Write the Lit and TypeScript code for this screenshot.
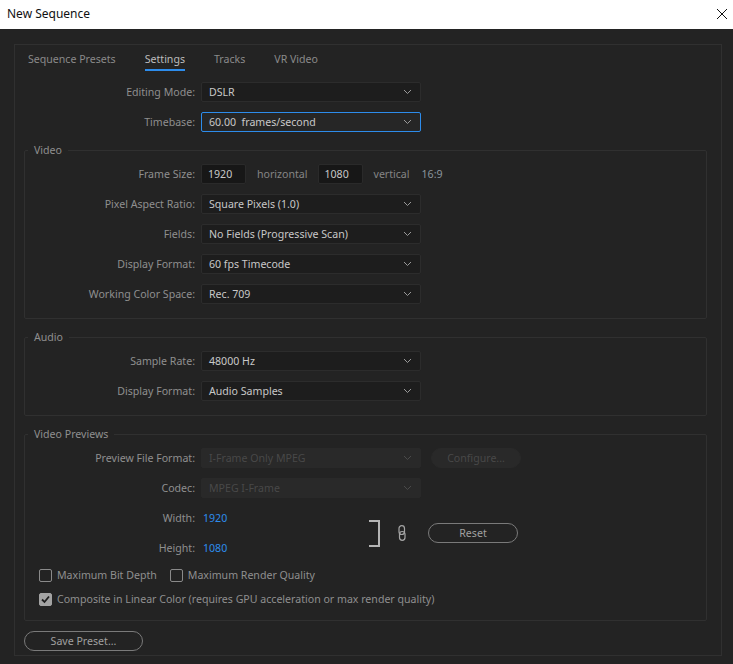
import { LitElement, html, css, svg } from "lit"
import { customElement } from "lit/decorators.js"

const chevron = html`<svg class="chev" width="9" height="6" viewBox="0 0 9 6">
  <path d="M1 1 L4.5 4.5 L8 1" fill="none" stroke="currentColor" stroke-width="1" />
</svg>`

const closeIcon = svg`<path d="M1 1 L11 11 M11 1 L1 11" fill="none" stroke="#111" stroke-width="1" />`

@customElement("app-root")
export class AppRoot extends LitElement {
  static styles = css`
    :host {
      display: block;
      width: 733px;
      height: 664px;
      overflow: hidden;
      background: #232323;
      color: #999;
      font-family: "Noto Sans", "Open Sans", sans-serif;
      font-size: 10.6px;
      line-height: 16px;
    }

    .titlebar {
      height: 29px;
      box-sizing: border-box;
      background: #fff;
      color: #111;
      font-size: 12px;
      display: flex;
      align-items: center;
      justify-content: space-between;
      padding: 0 5px 1px 7px;
    }

    .body {
      padding: 15px 11px 0 14px;
    }

    .panel {
      height: 612px;
      box-sizing: border-box;
      border: 1px solid #303030;
      padding: 0 14px 0 9px;
    }

    .tabs {
      display: flex;
      gap: 29px;
      height: 24px;
      padding: 6px 0 0 4px;
      margin-bottom: 7px;
      box-sizing: content-box;
    }

    .tab {
      height: 18px;
      color: #8a8a8a;
    }

    .tab.active {
      color: #bdbdbd;
      border-bottom: 2px solid #2d8ceb;
    }

    .top-rows {
      display: flex;
      flex-direction: column;
      gap: 10px;
      padding-left: 1px;
    }

    .rows {
      display: flex;
      flex-direction: column;
      gap: 10px;
    }

    .row {
      display: grid;
      grid-template-columns: 170px auto 1fr;
      column-gap: 6px;
      align-items: center;
      height: 20px;
    }

    .label {
      text-align: right;
      color: #8f8f8f;
    }

    .select {
      width: 220px;
      height: 20px;
      box-sizing: border-box;
      background: #1d1d1d;
      border: 1px solid #2c2c2c;
      border-radius: 2px;
      color: #c8c8c8;
      padding: 0 7px;
      display: flex;
      align-items: center;
      justify-content: space-between;
    }

    .select.focus {
      background: #262626;
      border-color: #2d8ceb;
    }

    .select.disabled {
      background: #292929;
      border-color: #292929;
      color: #484848;
    }

    .chev {
      color: #9a9a9a;
      margin-right: 1px;
    }

    .disabled .chev {
      color: #4a4a4a;
    }

    fieldset {
      margin: 10px 0 0;
      padding: 6px 0 14px;
      border: 1px solid #303030;
      border-radius: 2px;
      min-width: 0;
    }

    fieldset.previews {
      padding-bottom: 13px;
    }

    legend {
      margin-left: 3px;
      padding: 0 6px;
      color: #8f8f8f;
    }

    .frame-size {
      display: flex;
      align-items: center;
    }

    .num {
      width: 45px;
      height: 20px;
      box-sizing: border-box;
      background: #171717;
      border: 1px solid #2a2a2a;
      border-radius: 2px;
      color: #c8c8c8;
      padding: 0 0 0 6px;
      display: flex;
      align-items: center;
    }

    .unit {
      color: #858585;
      margin: 0 10px 0 11px;
    }

    .ratio {
      color: #8a949c;
      margin-left: 2px;
      margin-bottom: 1px;
    }

    .btn {
      box-sizing: border-box;
      height: 20px;
      border: 1px solid #7a7a7a;
      border-radius: 10px;
      color: #a0a0a0;
      display: flex;
      align-items: center;
      justify-content: center;
    }

    .configure {
      width: 90px;
      margin-left: 10px;
      background: #292929;
      border-color: #292929;
      color: #484848;
    }

    .dims {
      display: flex;
      align-items: center;
      margin-top: 10px;
    }

    .dims-rows {
      width: 344px;
      display: flex;
      flex-direction: column;
      gap: 10px;
    }

    .blue {
      color: #2d8ceb;
      padding-left: 2px;
    }

    .bracket {
      width: 11px;
      height: 27px;
      box-sizing: border-box;
      border: solid #b5b5b5;
      border-width: 2px 2px 2px 0;
    }

    .link {
      margin-left: 18px;
      color: #a5a5a5;
    }

    .reset {
      width: 90px;
      margin-left: 22px;
    }

    .checks {
      padding: 9px 0 0 14px;
      display: flex;
      flex-direction: column;
      gap: 8px;
    }

    .check-line {
      display: flex;
      gap: 13px;
    }

    .check {
      display: flex;
      align-items: center;
      gap: 5px;
      height: 16px;
      color: #8f8f8f;
    }

    .box {
      width: 13px;
      height: 13px;
      box-sizing: border-box;
      border: 1px solid #8a8a8a;
      border-radius: 2px;
    }

    .box.on {
      background: #a3a3a3;
      border-color: #a3a3a3;
    }

    .box svg {
      display: block;
    }

    .save {
      width: 119px;
      margin-top: 10px;
    }
  `

  private selectRow(label: string, value: string) {
    return html`<div class="row">
      <div class="label">${label}:</div>
      <div class="select"><span>${value}</span>${chevron}</div>
    </div>`
  }

  private check(label: string, on = false) {
    return html`<div class="check">
      <div class="box ${on ? "on" : ""}">
        ${on
          ? html`<svg width="11" height="11" viewBox="0 0 11 11">
              <path d="M2 5.5 L4.5 8 L9 2.5" fill="none" stroke="#1e1e1e" stroke-width="1.8" />
            </svg>`
          : ""}
      </div>
      <span>${label}</span>
    </div>`
  }

  render() {
    return html`
      <div class="titlebar">
        <span>New Sequence</span>
        <svg width="12" height="12" viewBox="0 0 12 12">${closeIcon}</svg>
      </div>
      <div class="body">
        <div class="panel">
          <div class="tabs">
            <div class="tab">Sequence Presets</div>
            <div class="tab active">Settings</div>
            <div class="tab">Tracks</div>
            <div class="tab">VR Video</div>
          </div>
          <div class="top-rows">
            ${this.selectRow("Editing Mode", "DSLR")}
            <div class="row">
              <div class="label">Timebase:</div>
              <div class="select focus"><span>60.00&nbsp; frames/second</span>${chevron}</div>
            </div>
          </div>

          <fieldset>
            <legend>Video</legend>
            <div class="rows">
              <div class="row">
                <div class="label">Frame Size:</div>
                <div class="frame-size">
                  <div class="num">1920</div>
                  <span class="unit">horizontal</span>
                  <div class="num">1080</div>
                  <span class="unit">vertical</span>
                  <span class="ratio">16:9</span>
                </div>
              </div>
              ${this.selectRow("Pixel Aspect Ratio", "Square Pixels (1.0)")}
              ${this.selectRow("Fields", "No Fields (Progressive Scan)")}
              ${this.selectRow("Display Format", "60 fps Timecode")}
              ${this.selectRow("Working Color Space", "Rec. 709")}
            </div>
          </fieldset>

          <fieldset>
            <legend>Audio</legend>
            <div class="rows">
              ${this.selectRow("Sample Rate", "48000 Hz")}
              ${this.selectRow("Display Format", "Audio Samples")}
            </div>
          </fieldset>

          <fieldset class="previews">
            <legend>Video Previews</legend>
            <div class="rows">
              <div class="row">
                <div class="label">Preview File Format:</div>
                <div class="frame-size">
                  <div class="select disabled"><span>I-Frame Only MPEG</span>${chevron}</div>
                  <div class="btn configure">Configure...</div>
                </div>
              </div>
              <div class="row">
                <div class="label">Codec:</div>
                <div class="select disabled"><span>MPEG I-Frame</span>${chevron}</div>
              </div>
            </div>
            <div class="dims">
              <div class="dims-rows">
                <div class="row"><div class="label">Width:</div><div class="blue">1920</div></div>
                <div class="row"><div class="label">Height:</div><div class="blue">1080</div></div>
              </div>
              <div class="bracket"></div>
              <svg class="link" width="8" height="16" viewBox="0 0 8 16">
                <rect x="1" y="0.700" width="5.500" height="8.800" rx="2.750" fill="none" stroke="currentColor" stroke-width="1.200" />
                <rect x="1.500" y="6.500" width="5.500" height="8.800" rx="2.750" fill="none" stroke="currentColor" stroke-width="1.200" />
              </svg>
              <div class="btn reset">Reset</div>
            </div>
            <div class="checks">
              <div class="check-line">
                ${this.check("Maximum Bit Depth")}
                ${this.check("Maximum Render Quality")}
              </div>
              ${this.check("Composite in Linear Color (requires GPU acceleration or max render quality)", true)}
            </div>
          </fieldset>

          <div class="btn save">Save Preset...</div>
        </div>
      </div>
    `
  }
}
